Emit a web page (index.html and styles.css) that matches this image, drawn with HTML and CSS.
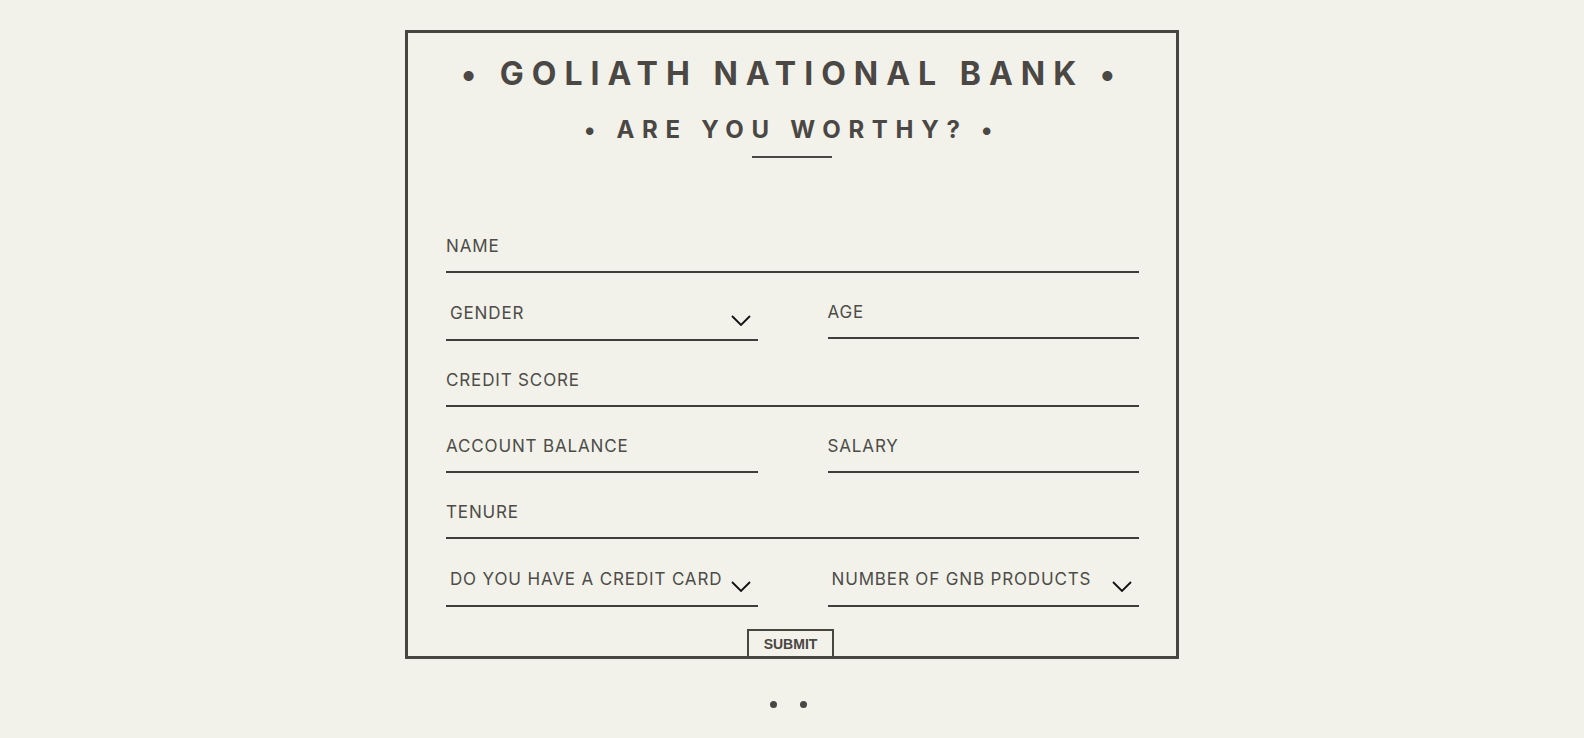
FILE: index.html
```html
<!DOCTYPE html>
<html lang="en">
<head>
<meta charset="utf-8">
<title>Goliath National Bank</title>
<link rel="stylesheet" href="styles.css">
</head>
<body>
<main class="card">
  <h1 class="title">• GOLIATH NATIONAL BANK •</h1>
  <h2 class="subtitle">• ARE YOU WORTHY? •</h2>
  <div class="rule"></div>
  <form class="form">
    <div class="row full">
      <div class="field">NAME</div>
    </div>
    <div class="row">
      <div class="field select"><span>GENDER</span><svg class="chev" viewBox="0 0 20 11" width="20" height="11"><polyline points="1,1 10,10 19,1" fill="none" stroke="#111" stroke-width="1.8"/></svg></div>
      <div class="field">AGE</div>
    </div>
    <div class="row full">
      <div class="field">CREDIT SCORE</div>
    </div>
    <div class="row">
      <div class="field">ACCOUNT BALANCE</div>
      <div class="field">SALARY</div>
    </div>
    <div class="row full">
      <div class="field">TENURE</div>
    </div>
    <div class="row">
      <div class="field select"><span>DO YOU HAVE A CREDIT CARD</span><svg class="chev" viewBox="0 0 20 11" width="20" height="11"><polyline points="1,1 10,10 19,1" fill="none" stroke="#111" stroke-width="1.8"/></svg></div>
      <div class="field select"><span>NUMBER OF GNB PRODUCTS</span><svg class="chev" viewBox="0 0 20 11" width="20" height="11"><polyline points="1,1 10,10 19,1" fill="none" stroke="#111" stroke-width="1.8"/></svg></div>
    </div>
    <div class="actions">
      <button type="button" class="submit">SUBMIT</button>
    </div>
  </form>
</main>
<div class="dots"><span></span><span></span></div>
</body>
</html>
```
FILE: styles.css
```css
body {
  margin: 0;
  background: #f2f2ea;
  font-family: "Inter", "Lato", sans-serif;
  color: #4a4744;
}

.card {
  box-sizing: border-box;
  width: 774px;
  height: 629px;
  margin: 30px auto 0;
  border: 3px solid #484641;
  overflow: hidden;
  padding-top: 21px;
}

.title {
  margin: 0;
  font-size: 32px;
  line-height: 40px;
  font-weight: 700;
  letter-spacing: 8px;
  text-align: center;
}

.subtitle {
  margin: 21px 0 0;
  font-size: 24px;
  line-height: 30px;
  font-weight: 700;
  letter-spacing: 7.7px;
  text-align: center;
}

.rule {
  width: 80px;
  height: 2px;
  background: #4a4744;
  margin: 11px auto 0;
}

.form {
  margin-top: 73px;
  padding: 0 37px 0 38px;
  display: flex;
  flex-direction: column;
  gap: 24px;
}

.row {
  display: grid;
  grid-template-columns: 1fr 1fr;
  column-gap: 70px;
  align-items: start;
}

.row.full {
  grid-template-columns: 1fr;
}

.field {
  box-sizing: border-box;
  height: 42px;
  padding-top: 5px;
  border-bottom: 2px solid #3f3e3a;
  font-size: 17px;
  line-height: 20px;
  letter-spacing: 0.85px;
  color: #4d4c49;
  white-space: nowrap;
}

.field.select {
  height: 44px;
  padding: 6px 7px 0 4px;
  display: flex;
  justify-content: space-between;
  align-items: flex-start;
}

.chev {
  display: block;
  margin-top: 12px;
  flex: none;
}

.actions {
  margin-top: -2px;
  text-align: center;
  padding-right: 4px;
}

.submit {
  font: bold 14px "Liberation Sans", Arial, sans-serif;
  line-height: 16px;
  padding: 5px 15px 11px;
  border: 2px solid #48463f;
  background: transparent;
  color: #4a4744;
  border-radius: 0;
}

.dots {
  display: flex;
  justify-content: center;
  gap: 23px;
  margin-top: 42px;
  padding-right: 7px;
}

.dots span {
  width: 7px;
  height: 7px;
  border-radius: 50%;
  background: #4a4744;
}
```
